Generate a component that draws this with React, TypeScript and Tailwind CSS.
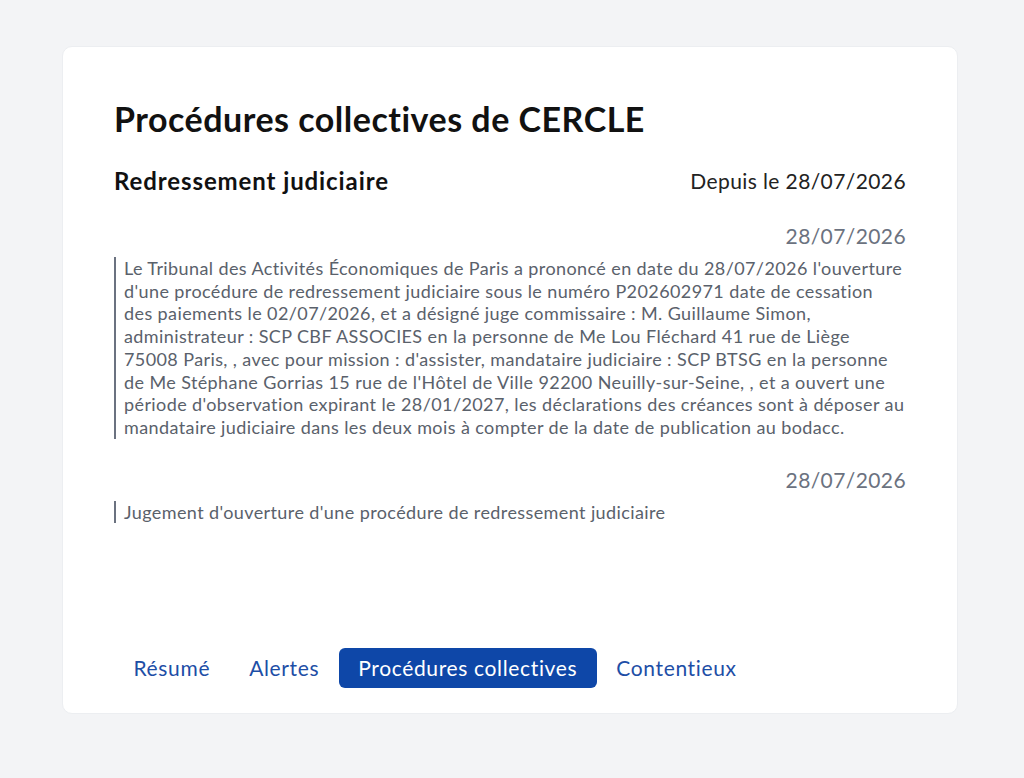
import React from "react";

const entries = [
  {
    date: "28/07/2026",
    text:
      "Le Tribunal des Activités Économiques de Paris a prononcé en date du 28/07/2026 l'ouverture d'une procédure de redressement judiciaire sous le numéro P202602971 date de cessation des paiements le 02/07/2026, et a désigné juge commissaire : M. Guillaume Simon, administrateur : SCP CBF ASSOCIES en la personne de Me Lou Fléchard 41 rue de Liège 75008 Paris, , avec pour mission : d'assister, mandataire judiciaire : SCP BTSG en la personne de Me Stéphane Gorrias 15 rue de l'Hôtel de Ville 92200 Neuilly-sur-Seine, , et a ouvert une période d'observation expirant le 28/01/2027, les déclarations des créances sont à déposer au mandataire judiciaire dans les deux mois à compter de la date de publication au bodacc.",
  },
  {
    date: "28/07/2026",
    text: "Jugement d'ouverture d'une procédure de redressement judiciaire",
  },
];

const tabs = ["Résumé", "Alertes", "Procédures collectives", "Contentieux"];

export default function App() {
  return (
    <div
      className="min-h-[778px] bg-[#f3f4f6] pt-[46px] pl-[62px]"
      style={{ fontFamily: "Lato, 'Noto Sans', sans-serif" }}
    >
      <div className="w-[896px] h-[668px] bg-white rounded-[10px] border border-[#eceef1] flex flex-col px-[51px] pt-[52px] pb-[25px]">
        <h1 className="text-[34px] leading-[40px] tracking-[0.5px] font-bold text-[#111]">
          Procédures collectives de CERCLE
        </h1>

        <div className="mt-[28px] flex items-center justify-between">
          <h2 className="text-[24px] leading-[28px] tracking-[0.9px] font-bold text-[#111]">
            Redressement judiciaire
          </h2>
          <span className="text-[21px] leading-[28px] tracking-[0.4px] text-[#222]">
            Depuis le 28/07/2026
          </span>
        </div>

        <div className="mt-[27px] flex flex-col gap-[27px]">
          {entries.map((e, i) => (
            <div key={i}>
              <div className="text-right text-[21px] leading-[28px] tracking-[0.4px] text-[#6b7280]">
                {e.date}
              </div>
              <p className="mt-[7px] border-l-2 border-[#6b7280] pl-[8px] text-[18px] leading-[22.7px] tracking-[0.4px] text-[#5a616b]">
                {e.text}
              </p>
            </div>
          ))}
        </div>

        <nav className="mt-auto flex items-center">
          {tabs.map((t) => {
            const active = t === "Procédures collectives";
            return (
              <button
                key={t}
                className={`h-[40px] px-[19.5px] rounded-[6px] text-[21px] tracking-[0.65px] ${
                  active ? "bg-[#0e47a8] text-white" : "text-[#1d4ea6]"
                }`}
              >
                {t}
              </button>
            );
          })}
        </nav>
      </div>
    </div>
  );
}
